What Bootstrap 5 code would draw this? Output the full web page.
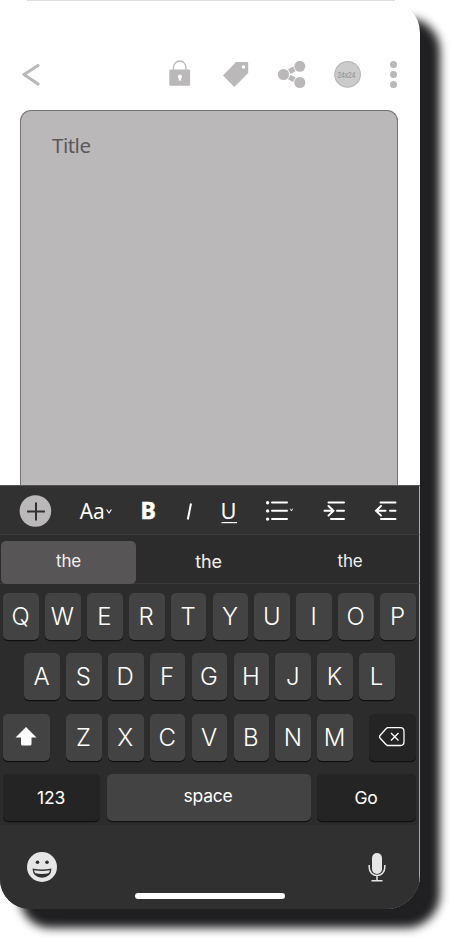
<!DOCTYPE html>
<html lang="en">
<head>
<meta charset="utf-8">
<meta name="viewport" content="width=device-width, initial-scale=1">
<title>Note editor</title>
<link href="https://cdn.jsdelivr.net/npm/bootstrap@5.3.0/dist/css/bootstrap.min.css" rel="stylesheet">
<style>
body{background:#fff;overflow:hidden;height:944px;font-family:Inter,"Liberation Sans",sans-serif}
.phone{width:420px;height:909px;background:#fff;border-radius:30px 33px 34px 30px;box-shadow:20px 18.5px 10px #202022}
.topline{height:1px;margin:0 25px 0 27px;background:#dedede}
.topbar{height:109px;padding:59px 22px 0 22px}
.topbar svg,.tools svg{display:block;flex:none}
.tools{height:30px}
.note{margin:0 22px 0 20px;height:375px;border:1px solid #747474;border-bottom:0;border-radius:11px 11px 0 0;background:#bab8b9;padding:19px 31px}
.note-title{font:20.500px/30px "Noto Sans",sans-serif;letter-spacing:-.5px;color:#5b595a}
.kb{height:424px;background:#2c2c2c;border-top:1px solid #555;color:#fff;border-radius:0 0 34px 30px;overflow:hidden}
.format{height:49px;background:#313131;border-bottom:1px solid #3c3c3c}
.rim{border-right:1px solid #aaa}
.format svg{display:block}
.format text{font-family:"Noto Sans",sans-serif;fill:#fff}
.suggest{height:49px;border-bottom:1px solid #3a3a3a;font-size:17px;line-height:1;color:#f1f1f1;letter-spacing:-.2px}
.pick{width:135px;height:43px;margin:6px 0 0 1px;border-radius:5px;background:#575556;padding-bottom:2px}
.mid{width:145px;padding-top:6px;font-size:18px}
.end{width:138px;padding-top:5px}
.keys{padding:9px 3px 0 3px;height:241px}
.krow{height:47px;margin-bottom:13.3px;gap:6.2px}
.k{width:35.7px;height:47px;background:#434343;border-radius:5px;box-shadow:0 1.3px 0 #111;font-size:24px;font-weight:350;line-height:1;padding:1px 1px 0 0;flex:none}
.k.wide{width:47px;padding-top:0}
.k.dark{background:#242424}
.k.sm{font-size:17.500px;font-weight:400;letter-spacing:-.2px}
.k.n123{width:97px}.k.spc{width:204px;padding-bottom:5px}.k.go{width:99px}
.foot{background:#303030;height:60px;padding:27px 33px 0 27px}
.foot svg{flex:none}
.base{background:#303030;height:25px;padding-top:8px}
.homebar{width:150px;height:6px;border-radius:3px;background:#fff}
</style>
</head>
<body>
<main class="phone">
  <div class="topline"></div>
  <header class="topbar d-flex justify-content-between">
    <svg width="20" height="30"><path d="M16 5.500 2 14.500 16 24" fill="none" stroke="#bab8b9" stroke-width="3.200" stroke-linecap="round" stroke-linejoin="round"/></svg>
    <div class="tools">
      <svg width="232" height="30" viewBox="166 60 232 30" fill="#bab8b9">
        <path d="M173.500 70v-2.500a6.200 6.500 0 0 1 12.400 0v2.500" fill="none" stroke="#bab8b9" stroke-width="1.300"/>
        <rect x="169.300" y="69.500" width="20.800" height="16.300" rx="1"/>
        <circle cx="179.900" cy="76.700" r="2.100" fill="#fff"/><path d="M179.100 77h1.700l.5 3.400h-2.700z" fill="#fff"/>
        <path d="M236 62h11.500l.7.700v10.300L234.300 87 223 75.500z"/><circle cx="243.500" cy="67" r="1.700" fill="#fff"/>
        <path d="m289.300 71.600 5-2.700M289.300 77l5 2.700" stroke="#bab8b9" stroke-width="5.200" fill="none"/>
        <circle cx="283.500" cy="74.500" r="5.600"/><circle cx="299.800" cy="66.300" r="5.500"/><circle cx="299.800" cy="82.500" r="5.500"/>
        <circle cx="347.600" cy="74.400" r="12.800" fill="#cbcbcb" stroke="#b8b6b7" stroke-width="1.100"/>
        <text x="337.400" y="77.600" textLength="18" lengthAdjust="spacingAndGlyphs" font-family="Liberation Sans, sans-serif" font-size="8.500" fill="#999" stroke="#999" stroke-width=".2">24x24</text>
        <circle cx="393.500" cy="64.400" r="3.500"/><circle cx="393.500" cy="74.400" r="3.500"/><circle cx="393.500" cy="84.400" r="3.500"/>
      </svg>
    </div>
  </header>
  <section class="note"><div class="note-title">Title</div></section>
  <section class="kb">
    <div class="format rim">
      <svg width="419" height="48" viewBox="0 486 419 48">
        <circle cx="35.400" cy="511" r="15.800" fill="#bab8b9"/><path d="M27 511.500h18M36 502.500v18" stroke="#313131" stroke-width="2"/>
        <text x="79.800" y="518.700" font-size="22.500" textLength="25" lengthAdjust="spacingAndGlyphs">Aa</text>
        <path d="m106.600 509.500 2.400 3.500 2.400-3.500" fill="none" stroke="#fff" stroke-width="1.100"/>
        <text x="140.600" y="519.300" font-size="23" font-weight="700" textLength="15.400" lengthAdjust="spacingAndGlyphs" stroke="#fff" stroke-width=".5">B</text>
        <path d="m191 503.500-3.200 16" stroke="#fff" stroke-width="2"/>
        <text x="220.600" y="518.700" font-size="22.500" textLength="16" lengthAdjust="spacingAndGlyphs">U</text>
        <path d="M221.500 522.600h15.500" stroke="#fff" stroke-width="1.200"/>
        <g fill="none" stroke="#fff" stroke-width="2" stroke-linecap="round">
          <path d="M272 502.600h15M272 510.800h15M272 519h15"/>
          <path d="M328.500 502.600h15.500M337 510.800h7M331 519h13M324.500 510.800h8M328.500 506l5 4.800-5 4.800"/>
          <path d="M380.500 502.600H395.500M390 510.800h5.500M381 519h14.500M376.500 510.800h9M381 506l-5 4.800 5 4.800"/>
        </g>
        <g fill="#fff"><circle cx="267.600" cy="502.700" r="1.700"/><circle cx="267.600" cy="510.900" r="1.700"/><circle cx="267.600" cy="519.100" r="1.700"/></g>
        <path d="m290.300 508.700 1.200 2.200 1.200-2.200" fill="none" stroke="#fff" stroke-width=".9"/>
      </svg>
    </div>
    <div class="suggest rim d-flex">
      <div class="pick d-flex align-items-center justify-content-center">the</div>
      <div class="mid d-flex align-items-center justify-content-center"><span>the</span></div>
      <div class="end d-flex align-items-center justify-content-center"><span>the</span></div>
    </div>
    <div class="keys rim">
      <div class="krow d-flex justify-content-center">
        <div class="k d-flex align-items-center justify-content-center">Q</div><div class="k d-flex align-items-center justify-content-center">W</div><div class="k d-flex align-items-center justify-content-center">E</div><div class="k d-flex align-items-center justify-content-center">R</div><div class="k d-flex align-items-center justify-content-center">T</div><div class="k d-flex align-items-center justify-content-center">Y</div><div class="k d-flex align-items-center justify-content-center">U</div><div class="k d-flex align-items-center justify-content-center">I</div><div class="k d-flex align-items-center justify-content-center">O</div><div class="k d-flex align-items-center justify-content-center">P</div>
      </div>
      <div class="krow d-flex justify-content-center">
        <div class="k d-flex align-items-center justify-content-center">A</div><div class="k d-flex align-items-center justify-content-center">S</div><div class="k d-flex align-items-center justify-content-center">D</div><div class="k d-flex align-items-center justify-content-center">F</div><div class="k d-flex align-items-center justify-content-center">G</div><div class="k d-flex align-items-center justify-content-center">H</div><div class="k d-flex align-items-center justify-content-center">J</div><div class="k d-flex align-items-center justify-content-center">K</div><div class="k d-flex align-items-center justify-content-center">L</div>
      </div>
      <div class="krow d-flex justify-content-between">
        <div class="k wide d-flex align-items-center justify-content-center"><svg width="22" height="20"><path d="M11 0 21.500 10.500H16.500V17q0 1.500-1.500 1.500H7.500Q6 18.500 6 17v-6.500H.5z" fill="#fff"/></svg></div>
        <div class="krow d-flex">
          <div class="k d-flex align-items-center justify-content-center">Z</div><div class="k d-flex align-items-center justify-content-center">X</div><div class="k d-flex align-items-center justify-content-center">C</div><div class="k d-flex align-items-center justify-content-center">V</div><div class="k d-flex align-items-center justify-content-center">B</div><div class="k d-flex align-items-center justify-content-center">N</div><div class="k d-flex align-items-center justify-content-center">M</div>
        </div>
        <div class="k wide dark d-flex align-items-center justify-content-center"><svg width="26" height="20" fill="none" stroke="#fff" stroke-width="1.300"><path d="M9 .7h12.500q3.500 0 3.500 4v9.800q0 4-3.500 4H9q-1 0-2-1L1.200 11.200q-1.400-1.500 0-3L7 1.700q1-1 2-1zM12 6l7.500 7.500M19.500 6 12 13.500"/></svg></div>
      </div>
      <div class="krow d-flex justify-content-between">
        <div class="k sm dark n123 d-flex align-items-center justify-content-center">123</div>
        <div class="k sm spc d-flex align-items-center justify-content-center">space</div>
        <div class="k sm dark go d-flex align-items-center justify-content-center">Go</div>
      </div>
    </div>
    <div class="foot rim d-flex justify-content-between">
      <svg width="30" height="31"><circle cx="15" cy="15" r="15" fill="#e6e6e6"/><circle cx="10.500" cy="10.300" r="1.800" fill="#303030"/><circle cx="20" cy="10.300" r="1.800" fill="#303030"/><path d="M5.500 16.500q9.500 2 19 0Q24 25.700 15 25.700T5.500 16.500z" fill="#303030"/><path d="M7 18.200q8 1.500 16 0-.3 2-1.500 3-6.500 1.400-13 0Q7.300 20.200 7 18.200z" fill="#e6e6e6"/></svg>
      <svg width="18" height="30"><rect x="4" y="1" width="10" height="21" rx="5" fill="#e6e6e6"/><path d="M1.200 13v2.500a7.800 8 0 0 0 15.600 0V13M9 23.500v5M3.500 28.700h11" fill="none" stroke="#e6e6e6" stroke-width="1.500"/></svg>
    </div>
    <div class="base d-flex justify-content-center"><div class="homebar"></div></div>
  </section>
</main>
<script src="https://cdn.jsdelivr.net/npm/bootstrap@5.3.0/dist/js/bootstrap.bundle.min.js"></script>
</body>
</html>
